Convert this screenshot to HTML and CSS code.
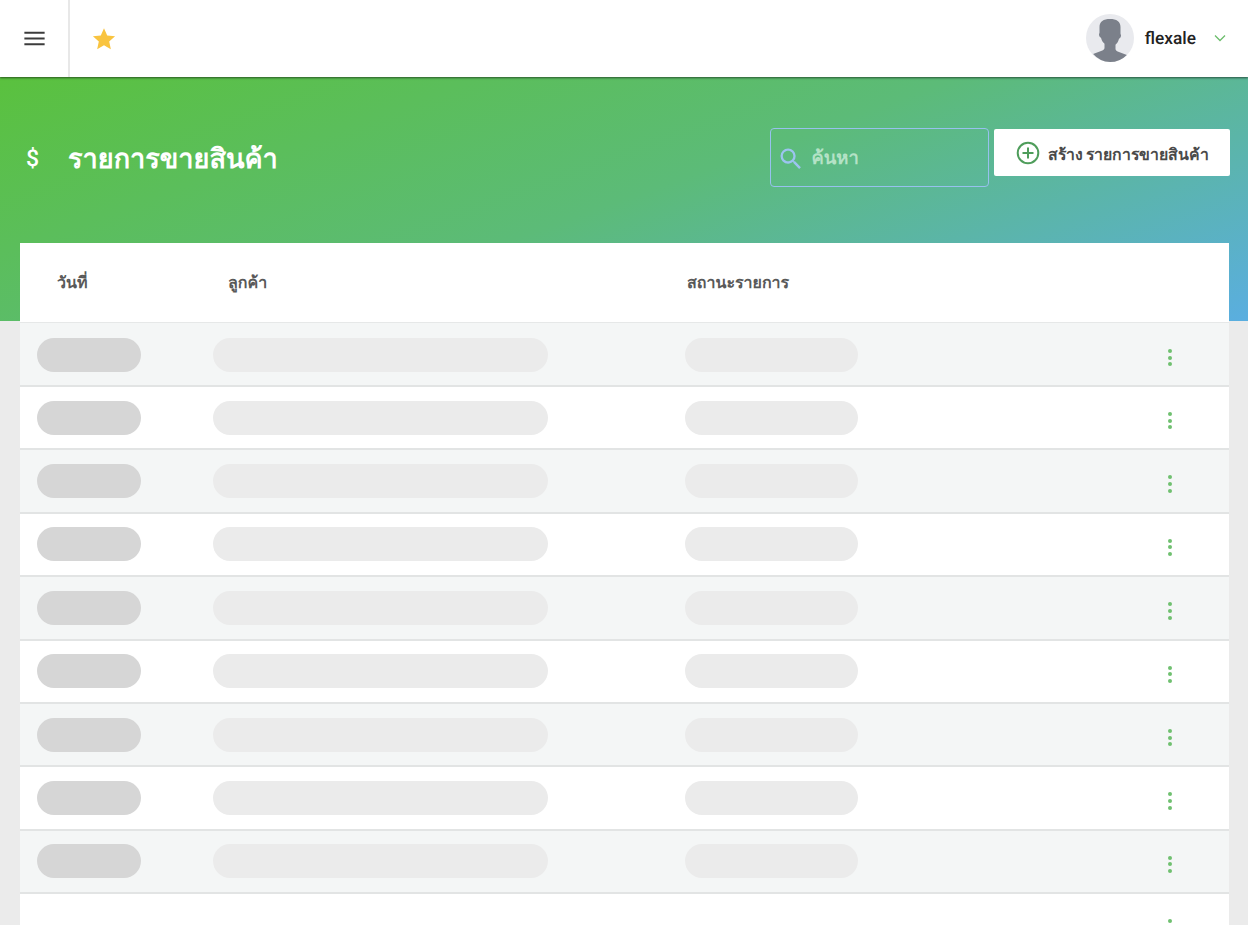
FILE: index.html
```html
<!DOCTYPE html>
<html lang="th">
<head>
<meta charset="utf-8">
<title>รายการขายสินค้า</title>
<link rel="stylesheet" href="styles.css">
</head>
<body>
<header class="topbar">
  <button class="menu-btn" aria-label="menu">
    <svg width="27" height="27" viewBox="0 0 24 24"><path d="M3 6h18v1.800H3zM3 11.100h18v1.800H3zM3 16.200h18v1.800H3z" fill="#3c3c3c"/></svg>
  </button>
  <div class="fav">
    <svg width="28" height="28" viewBox="0 0 24 24"><path d="M12 2.800l2.750 6.200 6.750.7-5.050 4.500 1.420 6.600L12 17.400l-5.870 3.400 1.420-6.600L2.500 9.700l6.750-.7z" fill="#f9c440"/></svg>
  </div>
  <div class="user">
    <svg class="avatar" width="48" height="48" viewBox="0 0 48 48">
      <circle cx="24" cy="24" r="24" fill="#e9eaee"/>
      <path d="M24 5c-6.500 0-10.500 2.600-10.500 8v5.500c0 .8-.5 1-.5 2 0 1.600.8 2.800 2 3.200.6 2.600 1.800 4.600 3.500 6v4c0 1.500-1 2.300-2.800 3l-8.600 3.200A24 24 0 0 0 24 48a24 24 0 0 0 16.900-7.100l-8.600-3.200c-1.800-.7-2.800-1.500-2.800-3v-4c1.700-1.400 2.900-3.400 3.500-6 1.200-.4 2-1.600 2-3.200 0-1-.5-1.200-.5-2V13c0-5.400-4-8-10.500-8z" fill="#7b808a"/>
    </svg>
    <span class="user-name">flexale</span>
    <svg class="chev" width="12" height="12" viewBox="0 0 12 12"><path d="M1 3.500L6 8.500l5-5" fill="none" stroke="#6cbd6c" stroke-width="1.300"/></svg>
  </div>
</header>

<section class="hero">
  <div class="title-wrap">
    <span class="title-icon">$</span>
    <h1 class="title">รายการขายสินค้า</h1>
  </div>
  <div class="actions">
    <label class="search">
      <svg class="search-icon" width="28" height="28" viewBox="0 0 24 24"><path d="M15.500 14h-.79l-.28-.27A6.470 6.470 0 0 0 16 9.500 6.500 6.500 0 1 0 9.500 16c1.610 0 3.090-.59 4.230-1.570l.27.28v.79l5 4.990L20.490 19l-4.990-5zm-6 0C7.010 14 5 11.990 5 9.500S7.010 5 9.500 5 14 7.010 14 9.500 11.990 14 9.500 14z" fill="#9cc4f0"/></svg>
      <span class="search-text">ค้นหา</span>
    </label>
    <button class="create-btn">
      <svg width="26" height="26" viewBox="0 0 26 26"><circle cx="13" cy="13" r="10.300" fill="none" stroke="#4f9d5b" stroke-width="2"/><path d="M13 7.500v11M7.500 13h11" stroke="#4f9d5b" stroke-width="2"/></svg>
      <span class="create-label">สร้าง รายการขายสินค้า</span>
    </button>
  </div>
</section>

<main class="card">
  <div class="row head">
    <div class="head-date">วันที่</div>
    <div class="head-customer">ลูกค้า</div>
    <div class="head-status">สถานะรายการ</div>
  </div>
  <div class="row item odd"><span class="pill pill-date"></span><span class="pill pill-customer"></span><span class="pill pill-status"></span><span class="dots"><i></i><i></i><i></i></span></div>
  <div class="row item"><span class="pill pill-date"></span><span class="pill pill-customer"></span><span class="pill pill-status"></span><span class="dots"><i></i><i></i><i></i></span></div>
  <div class="row item odd"><span class="pill pill-date"></span><span class="pill pill-customer"></span><span class="pill pill-status"></span><span class="dots"><i></i><i></i><i></i></span></div>
  <div class="row item"><span class="pill pill-date"></span><span class="pill pill-customer"></span><span class="pill pill-status"></span><span class="dots"><i></i><i></i><i></i></span></div>
  <div class="row item odd"><span class="pill pill-date"></span><span class="pill pill-customer"></span><span class="pill pill-status"></span><span class="dots"><i></i><i></i><i></i></span></div>
  <div class="row item"><span class="pill pill-date"></span><span class="pill pill-customer"></span><span class="pill pill-status"></span><span class="dots"><i></i><i></i><i></i></span></div>
  <div class="row item odd"><span class="pill pill-date"></span><span class="pill pill-customer"></span><span class="pill pill-status"></span><span class="dots"><i></i><i></i><i></i></span></div>
  <div class="row item"><span class="pill pill-date"></span><span class="pill pill-customer"></span><span class="pill pill-status"></span><span class="dots"><i></i><i></i><i></i></span></div>
  <div class="row item odd"><span class="pill pill-date"></span><span class="pill pill-customer"></span><span class="pill pill-status"></span><span class="dots"><i></i><i></i><i></i></span></div>
  <div class="row item"><span class="dots"><i></i><i></i><i></i></span></div>
</main>
</body>
</html>
```
FILE: styles.css
```css
* { box-sizing: border-box; }
html, body { margin: 0; height: 925px; overflow: hidden; }
body { background: #ebebeb; font-family: Roboto, "Noto Sans", "Liberation Sans", sans-serif; color: #222; text-rendering: geometricPrecision; }

.topbar { position: relative; z-index: 2; height: 77px; display: flex; align-items: center; background: #fff; box-shadow: 0 1px 2px rgba(0,0,0,.55); }
.menu-btn { width: 70px; height: 77px; display: flex; align-items: center; justify-content: center; padding: 0; border: 0; border-right: 2px solid #e8e8e8; background: #fff; }
.fav { margin-left: 20px; display: flex; padding-top: 1px; }
.user { margin-left: auto; display: flex; align-items: center; padding-right: 22px; }
.avatar { display: block; margin: -1px 11px 0 0; }
.user-name { font-size: 17.300px; font-weight: 500; color: #222; margin-right: 18px; margin-top: 1px; }
.chev { margin-top: -1px; }

.hero { height: 244px; padding: 51px 18px 0 25px; display: flex; align-items: flex-start; justify-content: space-between; background: linear-gradient(160deg, #5ac13e 0%, #5cbb78 50%, #5aaee0 100%); }
.title-wrap { display: flex; align-items: center; height: 60px; padding-top: 1px; color: #fff; }
.title-icon { width: 43px; padding-left: 1px; font-size: 23px; font-weight: 500; }
.title { margin: 0; font-size: 27.100px; font-weight: 700; line-height: 60px; }
.actions { display: flex; align-items: flex-start; gap: 5px; }
.search { width: 219px; height: 59px; padding: 0 6px; display: flex; align-items: center; gap: 6.500px; border: 1px solid #97c1ee; border-radius: 4px; }
.search-icon { margin-top: 2px; }
.search-text { color: #b4e2c6; font-size: 18.400px; font-weight: 700; margin-top: 1px; }
.create-btn { width: 236px; height: 47px; margin-top: 1px; display: flex; align-items: center; justify-content: center; gap: 7px; border: 0; border-radius: 2px; background: #fff; color: #4a4a4a; font: inherit; font-size: 15.800px; font-weight: 700; padding: 0; }
.create-label { margin-top: 3px; color: #4a4a4a; }

.card { margin: -78px 19px 0 20px; background: #fff; }
.row { display: flex; align-items: center; }
.head { height: 80px; padding-top: 2px; border-bottom: 1px solid #e6e8e8; color: #595959; font-size: 16px; font-weight: 700; }
.head-date { margin-left: 37px; width: 171px; }
.head-customer { width: 459px; }
.item { height: 63.400px; padding: 0 0 0 17px; border-bottom: 2px solid #e2e4e4; }
.head + .item { height: 64px; padding-top: 1px; }
.odd { background: #f4f6f6; }
.pill { display: block; height: 34px; border-radius: 17px; background: #ebebeb; }
.pill-date { width: 104px; margin-right: 72px; background: #d6d6d6; }
.pill-customer { width: 335px; margin-right: 137px; }
.pill-status { width: 173px; }
.dots { margin: 6px 57px 0 auto; display: flex; flex-direction: column; gap: 2.700px; }
.dots i { display: block; width: 4px; height: 4px; border-radius: 50%; background: #6fc070; }
```
